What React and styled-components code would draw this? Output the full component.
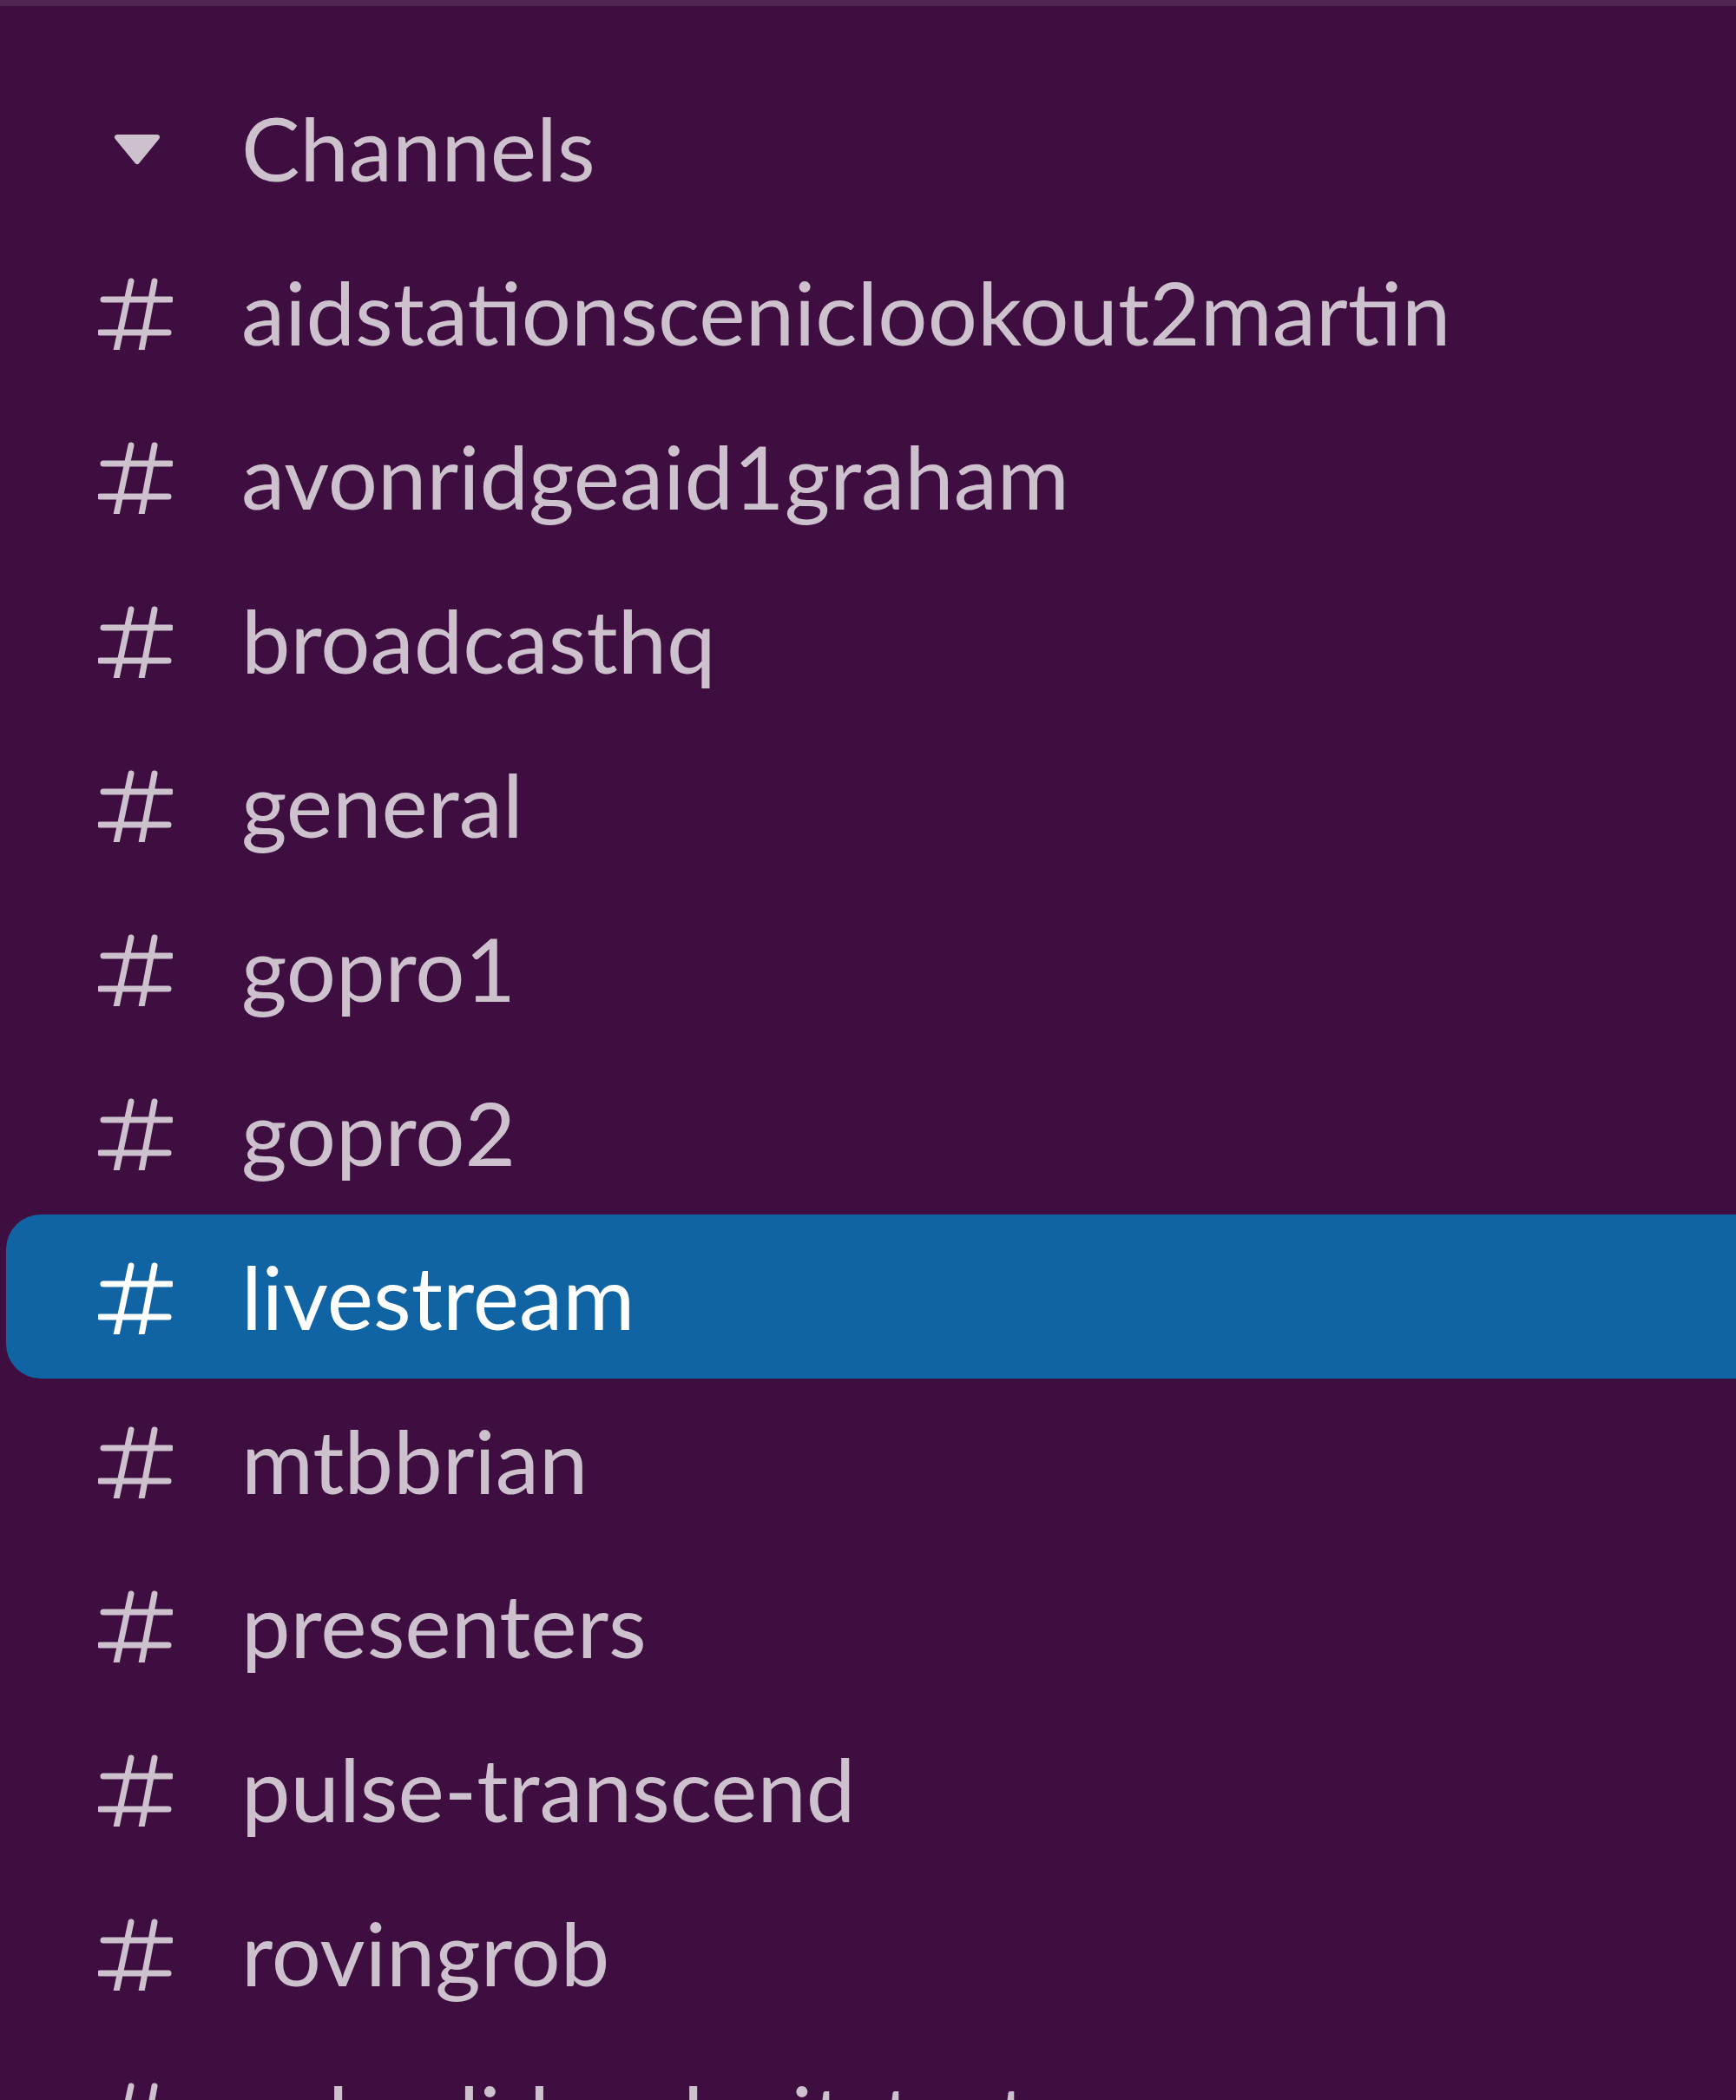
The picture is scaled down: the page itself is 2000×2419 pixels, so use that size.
import React from 'react'
import { styled, createGlobalStyle } from 'styled-components'

const GlobalStyle = createGlobalStyle`
    html, body {
        margin: 0;
        padding: 0;
        background: #3f0e40;
    }
    body {
        font-family: Lato, "Noto Sans", sans-serif;
        overflow: hidden;
    }
`

const Sidebar = styled.nav`
    height: 2419px;
    box-sizing: border-box;
    border-top: 7px solid #522653;
    padding-top: 69px;
    background: #3f0e40;
    overflow: hidden;
`

const Row = styled.div`
    display: flex;
    align-items: center;
    height: 189px;
    margin-left: 7px;
    padding-left: 106px;
    border-radius: 40px 0 0 40px;
    font-size: 101px;
    color: ${p => (p.$active ? '#ffffff' : '#cdc1ce')};
    background: ${p => (p.$active ? '#1164a3' : 'transparent')};
    white-space: nowrap;
`

const IconSlot = styled.span`
    display: flex;
    align-items: center;
    justify-content: center;
    width: 86px;
    height: 86px;
    margin-right: 79px;
    flex-shrink: 0;
`

const Label = styled.span`
    line-height: 1;
    font-variant-ligatures: common-ligatures;
`

const channels = [
    'aidstationsceniclookout2martin',
    'avonridgeaid1graham',
    'broadcasthq',
    'general',
    'gopro1',
    'gopro2',
    'livestream',
    'mtbbrian',
    'presenters',
    'pulse-transcend',
    'rovingrob',
    'subsalidesplayitstest',
]

const Caret = () => (
    <svg width="86" height="86" viewBox="0 0 86 86">
        <path d="M22 30 L68 30 L45 58 Z" fill="currentColor" stroke="currentColor"
            strokeWidth="6" strokeLinejoin="round" />
    </svg>
)

const Hash = () => (
    <svg width="86" height="86" viewBox="0 0 86 86">
        <g stroke="currentColor" strokeWidth="7" strokeLinecap="round" fill="none">
            <path d="M6 28 L84 28" />
            <path d="M2 66 L81 66" />
            <path d="M38 7 L21 87" />
            <path d="M65 7 L50 87" />
        </g>
    </svg>
)

const App = () => (
    <>
        <GlobalStyle />
        <Sidebar>
            <Row>
                <IconSlot><Caret /></IconSlot>
                <Label>Channels</Label>
            </Row>
            {channels.map(name => (
                <Row key={name} $active={name === 'livestream'}>
                    <IconSlot><Hash /></IconSlot>
                    <Label>{name}</Label>
                </Row>
            ))}
        </Sidebar>
    </>
)

export default App
